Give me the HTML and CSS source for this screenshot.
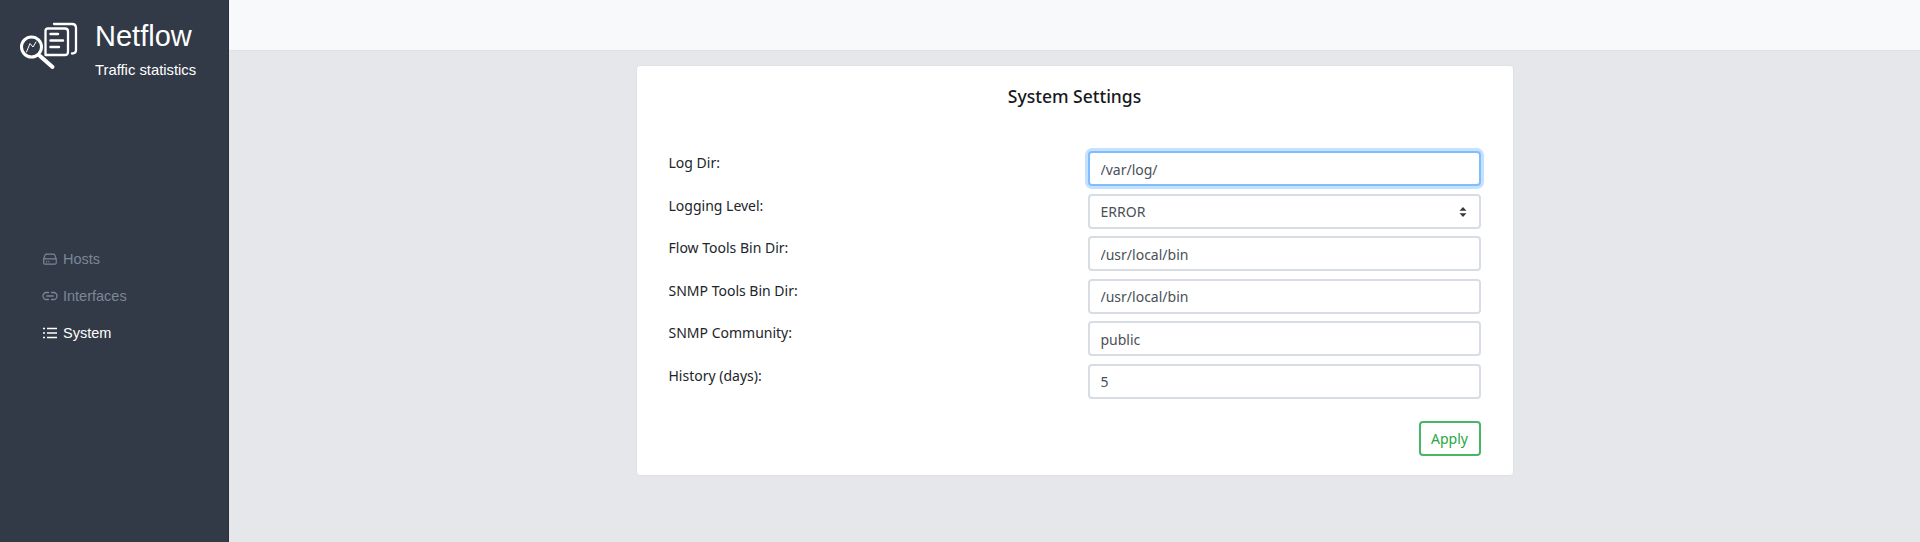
FILE: index.html
```html
<!DOCTYPE html>
<html lang="en">
<head>
<meta charset="utf-8">
<title>Netflow</title>
<link rel="stylesheet" href="styles.css">
</head>
<body>
<div class="app">
  <aside class="sidebar">
    <div class="brand">
      <svg class="logo" viewBox="0 0 60 52" width="60" height="52" fill="none" stroke="#fff" stroke-width="2.300" stroke-linecap="round" stroke-linejoin="round">
        <path d="M36 4 H54 Q58 4 58 8 V30 Q58 33.500 54 33.500"/>
        <path d="M27.500 11 Q27.500 8.500 30 8.500 H47 Q50 8.500 50 11.500 V32 Q50 35 47 35 H27.500 Z"/>
        <path d="M32.500 14 H40 M32.500 20.500 H45 M32.500 27 H41" stroke-width="2.400"/>
        <circle cx="13.500" cy="27" r="10" stroke-width="3" fill="#323a47"/>
        <path d="M8.500 32 L12 23.500 L15 27 L18 22" stroke-width="1"/>
        <path d="M22 36 L34.500 47" stroke-width="4"/>
      </svg>
      <div class="brand-text">
        <div class="brand-name">Netflow</div>
        <div class="brand-sub">Traffic statistics</div>
      </div>
    </div>
    <nav class="nav">
      <a class="nav-item">
        <svg class="nav-icon" viewBox="0 0 16 16" fill="currentColor"><path d="M4.500 2.500h7a2 2 0 0 1 1.800 1.200l1.500 4v4.300a1.800 1.800 0 0 1-1.800 1.800H2.900a1.800 1.800 0 0 1-1.800-1.800V7.700l1.500-4a2 2 0 0 1 1.900-1.200zm0 1.200a.8.8 0 0 0-.8.500L2.600 7.200h10.800l-1.100-3a.8.8 0 0 0-.8-.5h-7zM2.300 8.400V12c0 .3.300.6.600.6h10.200c.3 0 .6-.3.600-.6V8.400H2.300zM4 10h1.200v1.200H4V10zm2.200 0h1.200v1.200H6.200V10z"/></svg>
        <span>Hosts</span>
      </a>
      <a class="nav-item">
        <svg class="nav-icon" viewBox="0 0 16 16" fill="none" stroke="currentColor" stroke-width="1.300" stroke-linecap="round"><path d="M6.500 4.500H4.500a3.500 3.500 0 0 0 0 7h2M9.500 4.500h2a3.500 3.500 0 0 1 0 7h-2M4.800 8h6.400"/></svg>
        <span>Interfaces</span>
      </a>
      <a class="nav-item active">
        <svg class="nav-icon" viewBox="0 0 16 16" fill="none" stroke="currentColor" stroke-width="1.300"><path d="M5 3.500h10M5 8h10M5 12.500h10M1 3.500h2M1 8h2M1 12.500h2"/></svg>
        <span>System</span>
      </a>
    </nav>
  </aside>
  <div class="content">
    <header class="topbar"></header>
    <main class="main">
      <section class="card">
        <h2 class="card-title">System Settings</h2>
        <form class="form">
          <div class="row"><label class="label">Log Dir:</label><input class="control focused" value="/var/log/"></div>
          <div class="row"><label class="label">Logging Level:</label>
            <div class="control select"><span>ERROR</span>
              <svg class="caret" viewBox="0 0 8 12" width="8" height="12" fill="#343a40"><path d="M4 1 L7.500 4.800 H.500z M4 11 L.500 7.200 H7.500z"/></svg>
            </div>
          </div>
          <div class="row"><label class="label">Flow Tools Bin Dir:</label><input class="control" value="/usr/local/bin"></div>
          <div class="row"><label class="label">SNMP Tools Bin Dir:</label><input class="control" value="/usr/local/bin"></div>
          <div class="row"><label class="label">SNMP Community:</label><input class="control" value="public"></div>
          <div class="row"><label class="label">History (days):</label><input class="control" value="5"></div>
          <div class="actions"><button class="btn" type="button">Apply</button></div>
        </form>
      </section>
    </main>
  </div>
</div>
</body>
</html>
```
FILE: styles.css
```css
* { box-sizing: border-box; }
html, body { margin: 0; height: 100%; }
body { font-family: "Noto Sans", "Open Sans", sans-serif; font-size: 14px; color: #212529; overflow: hidden; }
.app { display: flex; height: 542px; }
.sidebar { width: 229px; flex: none; background: #323a47; border-right: 1px solid #2a313c; display: flex; flex-direction: column; font-family: "Liberation Sans", Arial, sans-serif; }
.brand { display: flex; align-items: flex-start; padding: 18px 0 0 18px; height: 240px; }
.logo { flex: none; margin-top: 2px; }
.brand-text { margin-left: 17px; color: #fff; }
.brand-name { font-size: 29px; line-height: 36px; }
.brand-sub { font-size: 14.800px; line-height: 18px; margin-top: 7px; }
.nav { display: flex; flex-direction: column; padding-left: 42px; }
.nav-item { display: flex; align-items: center; height: 37px; color: #7a8797; font-size: 14.500px; }
.nav-item.active { color: #fff; }
.nav-icon { width: 16px; height: 16px; margin-right: 5px; flex: none; }
.content { flex: 1; display: flex; flex-direction: column; min-width: 0; background: #e5e7eb; }
.topbar { height: 51px; flex: none; background: #f8f9fa; border-bottom: 1px solid #dee2e6; }
.main { flex: 1; display: flex; justify-content: center; align-items: flex-start; padding-top: 14px; }
.card { width: 878px; height: 411px; background: #fff; border: 1px solid #dee2e6; border-radius: 4px; padding: 17px 32px 0 32px; }
.card-title { margin: 0; text-align: center; font-size: 17.500px; font-weight: 500; line-height: 26px; color: #16191d; }
.form { margin-top: 42px; }
.row { display: flex; justify-content: space-between; align-items: flex-start; margin-bottom: 7.600px; height: 35px; }
.label { font-size: 14px; line-height: 21px; padding-top: 1px; }
.control { width: 393px; height: 35px; border: 2px solid #d8dde3; border-radius: 4px; padding: 1px 11px 0; font: inherit; color: #495057; background: #fff; outline: none; }
.control.focused { border-color: #80bdff; box-shadow: 0 0 0 3px rgba(128, 189, 255, .45); }
.select { display: flex; align-items: center; justify-content: space-between; padding-right: 12px; }
.caret { flex: none; }
.actions { display: flex; justify-content: flex-end; margin-top: 22px; }
.btn { height: 35px; width: 62px; padding: 0; border: 2px solid #48b567; border-radius: 4px; background: #fff; color: #28a745; font: inherit; }
```
